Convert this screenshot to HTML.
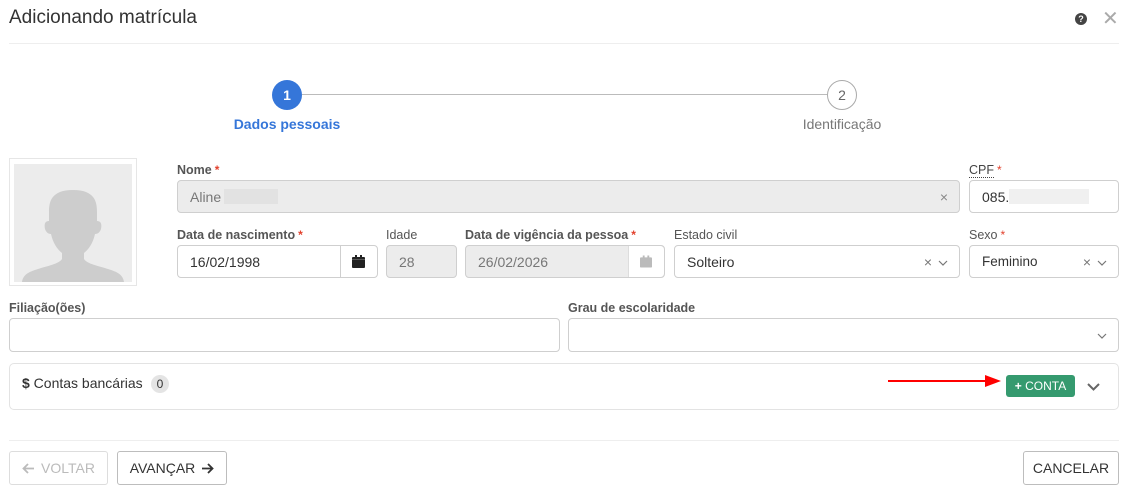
<!DOCTYPE html>
<html><head><meta charset="utf-8"><style>
*{box-sizing:border-box;margin:0;padding:0}
body{width:1129px;height:490px;background:#fff;font-family:"Liberation Sans",sans-serif;color:#333;position:relative;overflow:hidden}
.a{position:absolute}
.lbl{font-size:12.5px;font-weight:bold;color:#555}
.req{color:#e2412d;font-size:12px;vertical-align:top;margin-left:3px}
.inp{position:absolute;border:1px solid #cfcfcf;border-radius:4px;background:#fff;font-size:14px;color:#333;padding-left:12px;display:flex;align-items:center}
.dis{background:#ececec;color:#777}
.btn{position:absolute;border:1px solid #bdbdbd;border-radius:3px;background:#fff;font-size:14px;display:flex;align-items:center;justify-content:center;color:#333}
.x{position:absolute;top:8px;font-size:14px;color:#777}
.chev{position:absolute;top:14px}
</style></head><body>
<div class="a" style="left:9px;top:7px;font-size:19px;color:#333">Adicionando matrícula</div>
<div class="a" style="left:1075px;top:13px;width:12px;height:12px;border-radius:50%;background:#444;color:#fff;font-size:9px;font-weight:bold;text-align:center;line-height:12px">?</div>
<div class="a" style="left:1102px;top:8px;font-size:20px;color:#aaa;line-height:22px">✕</div>
<div class="a" style="left:9px;top:43px;width:1110px;height:1px;background:#eee"></div>

<div class="a" style="left:302px;top:94px;width:525px;height:1px;background:#bbb"></div>
<div class="a" style="left:272px;top:80px;width:30px;height:30px;border-radius:50%;background:#3576d9;color:#fff;font-size:14px;font-weight:bold;text-align:center;line-height:30px">1</div>
<div class="a" style="left:827px;top:80px;width:30px;height:30px;border-radius:50%;border:1px solid #aaa;background:#fff;color:#666;font-size:14px;text-align:center;line-height:28px">2</div>
<div class="a" style="left:207px;top:116px;width:160px;text-align:center;font-size:14px;color:#3576d9;font-weight:bold">Dados pessoais</div>
<div class="a" style="left:762px;top:116px;width:160px;text-align:center;font-size:14px;color:#777">Identificação</div>

<div class="a" style="left:9px;top:158px;width:128px;height:128px;border:1px solid #e6e6e6"></div>
<div class="a" style="left:14px;top:164px;width:118px;height:118px;background:#ececec;overflow:hidden">
<svg width="118" height="118" viewBox="0 0 118 118"><path d="M59 26c-22 0-24 12-24 22v9c-4 0-5 3-4 8 1 3 3 5 6 5 2 9 6 15 11 19v6c-3 5-15 7-24 10-10 3-15 6-16 13h102c-1-7-6-10-16-13-9-3-21-5-24-10v-6c5-4 9-10 11-19 3 0 5-2 6-5 1-5 0-8-4-8v-9c0-10-2-22-24-22z" fill="#cdcdcd"/></svg></div>

<div class="a lbl" style="left:177px;top:163px">Nome<span class="req">*</span></div>
<div class="inp dis" style="left:177px;top:180px;width:783px;height:33px">Aline<span style="display:inline-block;width:54px;height:15px;background:#e2e2e2;margin-left:3px"></span><span class="x" style="right:11px;color:#888">×</span></div>
<div class="a lbl" style="left:969px;top:163px;font-weight:normal;color:#444"><span style="border-bottom:1px dotted #444">CPF</span><span class="req">*</span></div>
<div class="inp" style="left:969px;top:180px;width:150px;height:33px">085.<span style="display:inline-block;width:80px;height:15px;background:#f0f0f0"></span></div>

<div class="a lbl" style="left:177px;top:228px">Data de nascimento<span class="req">*</span></div>
<div class="inp" style="left:177px;top:245px;width:201px;height:33px">16/02/1998</div>
<div class="a" style="left:340px;top:245px;width:1px;height:33px;background:#cfcfcf"></div>
<svg class="a" style="left:352px;top:255px" width="13" height="13" viewBox="0 0 13 13"><rect x="0" y="2" width="13" height="11" rx="1" fill="#222"/><rect x="3" y="0" width="2" height="4" fill="#222"/><rect x="8" y="0" width="2" height="4" fill="#222"/><rect x="0" y="4" width="13" height="1" fill="#555"/></svg>
<div class="a lbl" style="left:386px;top:228px;font-weight:normal">Idade</div>
<div class="inp dis" style="left:386px;top:245px;width:71px;height:33px">28</div>
<div class="a lbl" style="left:465px;top:228px">Data de vigência da pessoa<span class="req">*</span></div>
<div class="inp dis" style="left:465px;top:245px;width:200px;height:33px">26/02/2026</div>
<div class="a" style="left:628px;top:246px;width:36px;height:31px;background:#fff;border-left:1px solid #ddd;border-radius:0 4px 4px 0"></div>
<svg class="a" style="left:640px;top:255px" width="12" height="13" viewBox="0 0 13 13"><rect x="0" y="2" width="13" height="11" rx="1" fill="#bbb"/><rect x="3" y="0" width="2" height="4" fill="#bbb"/><rect x="8" y="0" width="2" height="4" fill="#bbb"/></svg>
<div class="a lbl" style="left:674px;top:228px;font-weight:normal">Estado civil</div>
<div class="inp" style="left:674px;top:245px;width:286px;height:33px">Solteiro<span class="x" style="right:27px">×</span><svg class="chev" style="right:11px" width="10" height="6"><path d="M1 1L5 5L9 1" stroke="#777" stroke-width="1.2" fill="none"/></svg></div>
<div class="a lbl" style="left:969px;top:228px;font-weight:normal">Sexo<span class="req">*</span></div>
<div class="inp" style="left:969px;top:245px;width:150px;height:33px;font-size:13.5px">Feminino<span class="x" style="right:27px">×</span><svg class="chev" style="right:11px" width="10" height="6"><path d="M1 1L5 5L9 1" stroke="#777" stroke-width="1.2" fill="none"/></svg></div>

<div class="a lbl" style="left:9px;top:301px">Filiação(ões)</div>
<div class="inp" style="left:9px;top:318px;width:551px;height:34px"></div>
<div class="a lbl" style="left:568px;top:301px">Grau de escolaridade</div>
<div class="inp" style="left:568px;top:318px;width:551px;height:34px"><svg class="chev" style="right:11px" width="10" height="6"><path d="M1 1L5 5L9 1" stroke="#777" stroke-width="1.2" fill="none"/></svg></div>

<div class="a" style="left:9px;top:363px;width:1110px;height:47px;border:1px solid #e3e3e3;border-radius:5px"></div>
<div class="a" style="left:22px;top:375px;font-size:14px;color:#333"><b>$</b> Contas bancárias</div>
<div class="a" style="left:151px;top:375px;width:18px;height:18px;border-radius:9px;background:#e4e4e4;font-size:12px;text-align:center;line-height:18px">0</div>
<div class="a" style="left:888px;top:380px;width:100px;height:2px;background:#f00"></div>
<svg class="a" style="left:985px;top:375px" width="16" height="12"><path d="M0 0L16 6L0 12z" fill="#f00"/></svg>
<div class="a" style="left:1006px;top:375px;width:69px;height:22px;background:#359a6f;border-radius:3px;color:#fff;font-size:12px;text-align:center;line-height:22px"><b>+</b> CONTA</div>
<svg class="a" style="left:1087px;top:383px" width="13" height="8"><path d="M1 1L6.5 6.5L12 1" stroke="#666" stroke-width="2" fill="none"/></svg>

<div class="a" style="left:9px;top:440px;width:1110px;height:1px;background:#eee"></div>
<div class="btn" style="left:9px;top:451px;width:99px;height:34px;color:#bbb;border-color:#ddd"><svg width="13" height="11" style="margin-right:6px"><path d="M12 5.5H2M6 1L1.5 5.5L6 10" stroke="#bbb" stroke-width="1.8" fill="none"/></svg>VOLTAR</div>
<div class="btn" style="left:117px;top:451px;width:110px;height:34px">AVANÇAR<svg width="13" height="11" style="margin-left:6px"><path d="M1 5.5H11M7 1L11.5 5.5L7 10" stroke="#333" stroke-width="1.8" fill="none"/></svg></div>
<div class="btn" style="left:1023px;top:451px;width:96px;height:34px">CANCELAR</div>
</body></html>
